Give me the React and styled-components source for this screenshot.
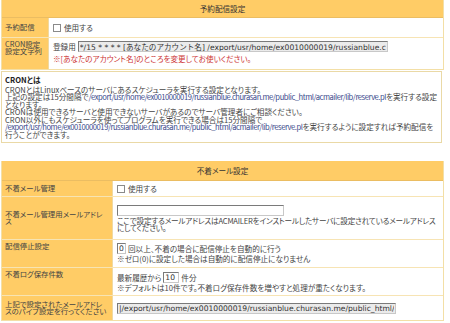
import styled, { createGlobalStyle } from 'styled-components'

const Global = createGlobalStyle`
  html, body { margin: 0; padding: 0; background: #fff; }
  body {
    font-family: "Noto Sans CJK JP", "Liberation Sans", sans-serif;
    font-size: 7.6px;
    font-feature-settings: "palt";
    color: #444;
  }
`

const PATH = '/export/usr/home/ex0010000019/russianblue.churasan.me/public_html/acmailer/lib/reserve.pl'

export default function App() {
  return (
    <S.Page>
      <Global />
      <S.Table>
        <S.Header>予約配信設定</S.Header>
        <S.Row cols="47px" h={19}>
          <S.Label>予約配信</S.Label>
          <S.Value>
            <S.CheckLine><S.Check />使用する</S.CheckLine>
          </S.Value>
        </S.Row>
        <S.Row cols="47px" h={31}>
          <S.Label top>CRON設定<br />設定文字列</S.Label>
          <S.Value top>
            <S.InputLine>
              登録用
              <S.Field readOnly w={310} value={`*/15 * * * * [あなたのアカウント名] ${PATH}`} />
            </S.InputLine>
            <S.Note>※[あなたのアカウント名]のところを変更してお使いください。</S.Note>
          </S.Value>
        </S.Row>
      </S.Table>

      <S.Box>
        <S.BoxTitle>CRONとは</S.BoxTitle>
        CRONとはLinuxベースのサーバにあるスケジューラを実行する設定となります。<br />
        上記の設定は15分間隔で<S.Path>{PATH}</S.Path>を実行する設定となります。<br />
        CRONは使用できるサーバと使用できないサーバがあるのでサーバ管理者にご相談ください。<br />
        CRON以外にもスケジューラを使ってプログラムを実行できる場合は15分間隔で<br />
        <S.Path>{PATH}</S.Path>を実行するように設定すれば予約配信を行うことができます。
      </S.Box>

      <S.Table second>
        <S.Header tall>不着メール設定</S.Header>
        <S.Row cols="111px" h={15}>
          <S.Label>不着メール管理</S.Label>
          <S.Value>
            <S.CheckLine><S.Check />使用する</S.CheckLine>
          </S.Value>
        </S.Row>
        <S.Row cols="111px" h={42}>
          <S.Label>不着メール管理用メールアドレス</S.Label>
          <S.Value>
            <S.Field w={167} white value="" readOnly />
            <S.Text tight>ここで設定するメールアドレスはACMAILERをインストールしたサーバに設定されているメールアドレスにしてください。</S.Text>
          </S.Value>
        </S.Row>
        <S.Row cols="111px" h={27}>
          <S.Label top>配信停止設定</S.Label>
          <S.Value top>
            <S.InputLine>
              <S.Field w={9} white value="0" readOnly />
              回以上、不着の場合に配信停止を自動的に行う
            </S.InputLine>
            <S.Text>※ゼロ(0)に設定した場合は自動的に配信停止になりません</S.Text>
          </S.Value>
        </S.Row>
        <S.Row cols="111px" h={27}>
          <S.Label top>不着ログ保存件数</S.Label>
          <S.Value>
            <S.InputLine>
              最新履歴から
              <S.Field w={16} white value="10" readOnly />
              件分
            </S.InputLine>
            <S.Text>※デフォルトは10件です。不着ログ保存件数を増やすと処理が重たくなります。</S.Text>
          </S.Value>
        </S.Row>
        <S.Row cols="111px" h={24}>
          <S.Label>上記で設定されたメールアドレスのパイプ設定を行ってください</S.Label>
          <S.Value>
            <S.Field w={279} value={`|${PATH}`} readOnly />
          </S.Value>
        </S.Row>
      </S.Table>
    </S.Page>
  )
}

const S = {
  Page: styled.div`
    width: 450px;
    height: 323px;
    padding: 0 0 0 1px;
    box-sizing: border-box;
    overflow: hidden;
  `,

  Table: styled.div`
    width: 441px;
    border: 1px solid #f3dfa6;
    border-top: none;
    margin-top: ${p => (p.second ? '18px' : '0')};
    background: #fff;
  `,

  Header: styled.div`
    height: ${p => (p.tall ? '19px' : '17px')};
    background: #ffcc66;
    border-bottom: 1px solid #ebbd62;
    display: flex;
    align-items: center;
    justify-content: center;
    color: #333;
  `,

  Row: styled.div`
    display: grid;
    grid-template-columns: ${p => p.cols} 1fr;
    min-height: ${p => p.h}px;
    border-top: 1px solid #f7e4b4;
    &:nth-child(2) { border-top: none; }
  `,

  Label: styled.div`
    background: #ffcc66;
    border-right: 1px solid #f0d9a0;
    padding: ${p => (p.top ? '3px 4px 0 3px' : '0 4px 0 3px')};
    display: flex;
    flex-direction: column;
    justify-content: ${p => (p.top ? 'flex-start' : 'center')};
    font-size: 7.4px;
    line-height: 6.6px;
    color: #444;
  `,

  Value: styled.div`
    padding: ${p => (p.top ? '3px 3px 2px 4px' : '2px 3px 2px 4px')};
    display: flex;
    flex-direction: column;
    justify-content: ${p => (p.top ? 'flex-start' : 'center')};
    align-items: flex-start;
    line-height: 7px;
  `,

  CheckLine: styled.div`
    display: flex;
    align-items: center;
    gap: 3px;
  `,

  Check: styled.span`
    width: 6px;
    height: 6px;
    border: 1px solid #8a8a8a;
    background: #fff;
  `,

  InputLine: styled.div`
    display: flex;
    align-items: center;
    gap: 2px;
    white-space: nowrap;
  `,

  Field: styled.input`
    width: ${p => p.w}px;
    height: 11px;
    box-sizing: border-box;
    padding: 0 1px;
    margin: 0;
    border: 1px solid #c8c8c8;
    border-top-color: #7a7a7a;
    border-left-color: #7a7a7a;
    background: ${p => (p.white ? '#fff' : '#ebebeb')};
    font-family: "DejaVu Sans", "Noto Sans CJK JP", sans-serif;
    font-size: 7.6px;
    color: #333;
    outline: none;
  `,

  Note: styled.div`
    color: #cc3333;
    margin-top: 3px;
  `,

  Text: styled.div`
    margin-top: 1px;
    letter-spacing: ${p => (p.tight ? '-0.2px' : '0')};
  `,

  Box: styled.div`
    width: 441px;
    box-sizing: border-box;
    margin-top: 1px;
    border: 1px solid #ead9a6;
    padding: 4px 2px 4px 3px;
    line-height: 7.5px;
  `,

  BoxTitle: styled.div`
    font-weight: bold;
    color: #222;
    margin-bottom: 2px;
  `,

  Path: styled.span`
    color: #3a4a8c;
    letter-spacing: -0.45px;
  `,
}
